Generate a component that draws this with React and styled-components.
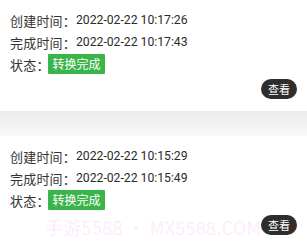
import React from "react";
import styled, { createGlobalStyle } from "styled-components";

const GlobalStyle = createGlobalStyle`
  body {
    margin: 0;
    background: #fff;
    font-family: Roboto, "Noto Sans CJK SC", sans-serif;
  }
`;

const records = [
  { created: "2022-02-22 10:17:26", finished: "2022-02-22 10:17:43", status: "转换完成" },
  { created: "2022-02-22 10:15:29", finished: "2022-02-22 10:15:49", status: "转换完成" },
];

const App = () => {
  return (
    <Page>
      <GlobalStyle />
      {records.map((r, i) => (
        <React.Fragment key={i}>
          {i > 0 && <Divider />}
          <Card>
            <Row>
              <Label>创建时间：</Label>
              <Value>{r.created}</Value>
            </Row>
            <Row>
              <Label>完成时间：</Label>
              <Value>{r.finished}</Value>
            </Row>
            <Row>
              <Label>状态：</Label>
              <Badge>{r.status}</Badge>
            </Row>
            <Actions>
              <ViewButton>查看</ViewButton>
            </Actions>
          </Card>
        </React.Fragment>
      ))}
      <Watermark>手游5588 • MX5588.COM</Watermark>
    </Page>
  );
};

const Page = styled.div`
  position: relative;
  width: 307px;
  height: 249px;
  overflow: hidden;
  background: #fff;
`;

const Card = styled.div`
  padding: 9px 10px 12px 10px;
  background: #fff;
`;

const Divider = styled.div`
  height: 25px;
  background: linear-gradient(#ececec, #f4f4f4 70%, #fafafa);
`;

const Row = styled.div`
  display: flex;
  align-items: center;
  height: 22px;
  font-size: 13px;
  color: #333;
`;

const Label = styled.span`
  font-family: "Noto Sans CJK SC", sans-serif;
  width: 66px;
  flex-shrink: 0;
  letter-spacing: 0.2px;
`;

const Value = styled.span`
  font-family: Roboto, sans-serif;
  font-size: 12.2px;
  color: #2a2a2a;
`;

const Badge = styled.span`
  margin-left: -28px;
  margin-top: -1px;
  display: inline-flex;
  align-items: center;
  justify-content: center;
  width: 57px;
  height: 20px;
  background: #3bb44a;
  color: #fff;
  font-size: 12px;
  font-family: "Noto Sans CJK SC", sans-serif;
  border-radius: 1px;
`;

const Actions = styled.div`
  display: flex;
  justify-content: flex-end;
  margin-top: 4px;
`;

const ViewButton = styled.span`
  position: relative;
  z-index: 2;
  display: inline-flex;
  align-items: center;
  justify-content: center;
  width: 36px;
  height: 20px;
  border-radius: 10px;
  background: #2e2e2e;
  color: #fff;
  font-size: 11px;
  font-family: "Noto Sans CJK SC", sans-serif;
`;

const Watermark = styled.div`
  position: absolute;
  z-index: 1;
  left: 45px;
  top: 214px;
  font-size: 18px;
  letter-spacing: 0.3px;
  font-family: "Noto Sans CJK SC", sans-serif;
  color: rgba(250, 205, 246, 0.4);
  white-space: nowrap;
  pointer-events: none;
`;

export default App;
